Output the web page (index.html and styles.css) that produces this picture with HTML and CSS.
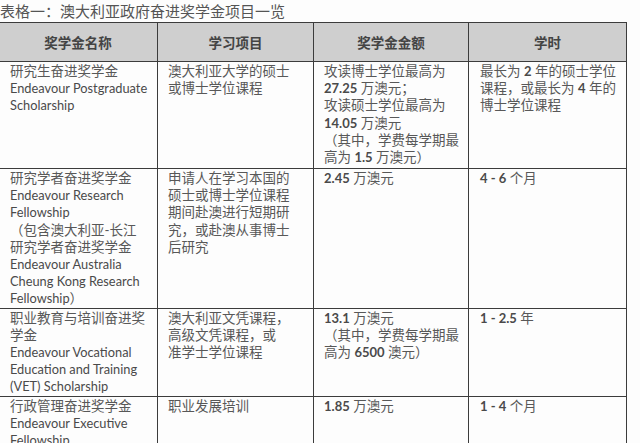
FILE: index.html
```html
<!DOCTYPE html>
<html lang="zh">
<head>
<meta charset="utf-8">
<title>澳大利亚政府奋进奖学金项目一览</title>
<link rel="stylesheet" href="styles.css">
</head>
<body>
<div class="page">
  <div class="caption">表格一：澳大利亚政府奋进奖学金项目一览</div>
  <table class="grid">
    <colgroup>
      <col class="c1"><col class="c2"><col class="c3"><col class="c4">
    </colgroup>
    <thead>
      <tr class="head">
        <th>奖学金名称</th>
        <th>学习项目</th>
        <th>奖学金金额</th>
        <th>学时</th>
      </tr>
    </thead>
    <tbody>
      <tr class="r1">
        <td>研究生奋进奖学金<br><span class="en">Endeavour Postgraduate</span><br><span class="en">Scholarship</span></td>
        <td>澳大利亚大学的硕士<br>或博士学位课程</td>
        <td>攻读博士学位最高为<br><span class="num">27.25</span> 万澳元；<br>攻读硕士学位最高为<br><span class="num">14.05</span> 万澳元<br>（其中，学费每学期最<br>高为 <span class="num">1.5</span> 万澳元）</td>
        <td>最长为 <span class="num">2</span> 年的硕士学位<br>课程，或最长为 <span class="num">4</span> 年的<br>博士学位课程</td>
      </tr>
      <tr class="r2">
        <td>研究学者奋进奖学金<br><span class="en">Endeavour Research</span><br><span class="en">Fellowship</span><br>（包含澳大利亚-长江<br>研究学者奋进奖学金<br><span class="en">Endeavour Australia</span><br><span class="en">Cheung Kong Research</span><br><span class="en">Fellowship</span>）</td>
        <td>申请人在学习本国的<br>硕士或博士学位课程<br>期间赴澳进行短期研<br>究，或赴澳从事博士<br>后研究</td>
        <td><span class="num">2.45</span> 万澳元</td>
        <td><span class="num">4 - 6</span> 个月</td>
      </tr>
      <tr class="r3">
        <td>职业教育与培训奋进奖<br>学金<br><span class="en">Endeavour Vocational</span><br><span class="en">Education and Training</span><br><span class="en">(VET) Scholarship</span></td>
        <td>澳大利亚文凭课程，<br>高级文凭课程，或<br>准学士学位课程</td>
        <td><span class="num">13.1</span> 万澳元<br>（其中，学费每学期最<br>高为 <span class="num">6500</span> 澳元）</td>
        <td><span class="num">1 - 2.5</span> 年</td>
      </tr>
      <tr class="r4">
        <td>行政管理奋进奖学金<br><span class="en">Endeavour Executive</span><br><span class="en">Fellowship</span></td>
        <td>职业发展培训</td>
        <td><span class="num">1.85</span> 万澳元</td>
        <td><span class="num">1 - 4</span> 个月</td>
      </tr>
    </tbody>
  </table>
</div>
</body>
</html>
```

FILE: styles.css
```css
html, body {
  margin: 0;
  padding: 0;
  background: #fdfdfd;
}

body {
  width: 640px;
  height: 443px;
  overflow: hidden;
  font-family: Lato, "Noto Sans CJK SC", sans-serif;
  color: #585858;
}

.page {
  display: flex;
  flex-direction: column;
}

.caption {
  font-family: "Noto Sans CJK SC", sans-serif;
  font-size: 15px;
  line-height: 22px;
  height: 22px;
  color: #555;
  white-space: nowrap;
}

.grid {
  margin-left: -2px;
  border-collapse: collapse;
  table-layout: fixed;
  width: 628px;
}

.c1 { width: 159px; }
.c2 { width: 156px; }
.c3 { width: 155px; }
.c4 { width: 158px; }

.grid th,
.grid td {
  border: 1.5px solid #3c3c3c;
  white-space: nowrap;
  overflow: hidden;
}

.grid th {
  background: #cfcfcf;
  font-family: "Noto Sans CJK SC", sans-serif;
  font-weight: 700;
  font-size: 13.5px;
  color: #444;
  height: 38px;
  text-align: center;
  vertical-align: middle;
  padding: 0;
}

.grid td {
  font-size: 13.5px;
  line-height: 17.2px;
  vertical-align: top;
  padding: 1px 2px 0 10px;
  text-align: left;
}

.grid td:first-child {
  padding-left: 11px;
}

.grid td:last-child {
  padding-left: 11px;
}

.r1 td { height: 105px; }
.r2 td { height: 136px; }
.r3 td { height: 84px; }
.r4 td { height: 80px; }

.en {
  font-family: Lato, sans-serif;
  font-size: 12.8px;
  color: #4a4a4a;
}

.num {
  font-family: Lato, sans-serif;
  font-size: 13px;
  font-weight: 700;
  color: #4a4a4a;
}
```
